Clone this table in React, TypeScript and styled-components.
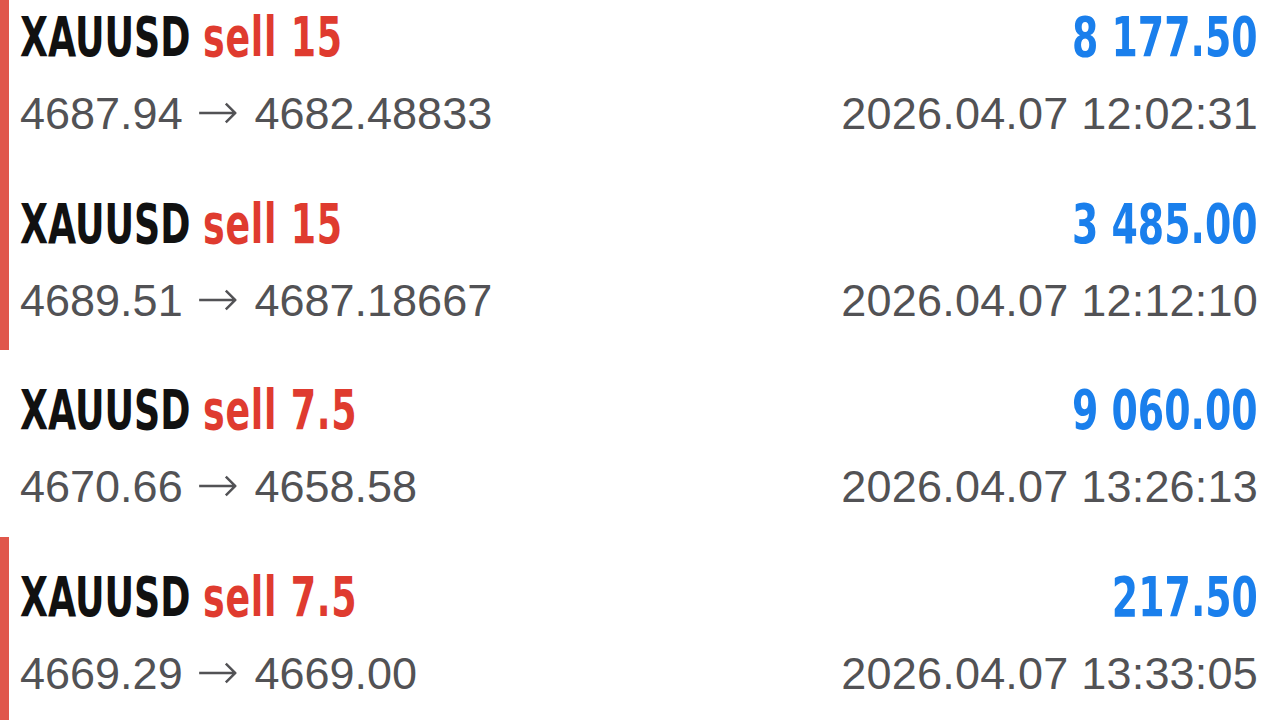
import React from 'react'
import styled, { createGlobalStyle } from 'styled-components'

type Deal = {
  symbol: string
  side: string
  volume: string
  profit: string
  open: string
  close: string
  time: string
  marked: boolean
}

const deals: Deal[] = [
  { symbol: 'XAUUSD', side: 'sell', volume: '15', profit: '8 177.50', open: '4687.94', close: '4682.48833', time: '2026.04.07 12:02:31', marked: true },
  { symbol: 'XAUUSD', side: 'sell', volume: '15', profit: '3 485.00', open: '4689.51', close: '4687.18667', time: '2026.04.07 12:12:10', marked: true },
  { symbol: 'XAUUSD', side: 'sell', volume: '7.5', profit: '9 060.00', open: '4670.66', close: '4658.58', time: '2026.04.07 13:26:13', marked: false },
  { symbol: 'XAUUSD', side: 'sell', volume: '7.5', profit: '217.50', open: '4669.29', close: '4669.00', time: '2026.04.07 13:33:05', marked: true },
]

const GlobalStyle = createGlobalStyle`
  html, body {
    margin: 0;
    padding: 0;
    background: #ffffff;
    overflow: hidden;
  }
  body {
    font-family: "Liberation Sans", Arial, sans-serif;
  }
`

const App: React.FC = () => {
  return (
    <>
      <GlobalStyle />
      <DealList>
        {deals.map((d, i) => (
          <DealRow key={i} marked={d.marked}>
            <TopLine>
              <Title>
                {d.symbol} <Side>{d.side} {d.volume}</Side>
              </Title>
              <Profit>{d.profit}</Profit>
            </TopLine>
            <BottomLine>
              <Prices>
                {d.open} <Arrow>→</Arrow> {d.close}
              </Prices>
              <Time>{d.time}</Time>
            </BottomLine>
          </DealRow>
        ))}
      </DealList>
    </>
  )
}

const DealList = styled.div`
  display: flex;
  flex-direction: column;
  margin-top: -23px;
  width: 1280px;
`

const DealRow = styled.div<{ marked: boolean }>`
  box-sizing: border-box;
  height: 186.5px;
  padding: 32px 22px 0 11px;
  border-left: 9px solid ${(props) => (props.marked ? '#e0574b' : 'transparent')};
  display: flex;
  flex-direction: column;
`

const TopLine = styled.div`
  display: flex;
  justify-content: space-between;
  align-items: baseline;
  height: 56px;
`

const BottomLine = styled.div`
  display: flex;
  justify-content: space-between;
  align-items: baseline;
  margin-top: 24px;
`

// no condensed face installed, so squeeze DejaVu Condensed Bold
const condensed = `
  display: inline-block;
  font-family: "DejaVu Sans Condensed", "DejaVu Sans", sans-serif;
  font-stretch: condensed;
  font-weight: 700;
  font-size: 55px;
  line-height: 56px;
  white-space: nowrap;
`

const Title = styled.div`
  ${condensed}
  transform: scaleX(0.735);
  transform-origin: left center;
  color: #111111;
`

const Side = styled.span`
  color: #df3b2f;
  letter-spacing: 1px;
`

const Profit = styled.div`
  ${condensed}
  transform: scaleX(0.765);
  transform-origin: right center;
  color: #1a7fec;
`

const Prices = styled.div`
  font-family: "Liberation Sans", Arial, sans-serif;
  font-size: 45px;
  line-height: 45px;
  color: #525255;
  white-space: nowrap;
`

const Arrow = styled.span`
  font-family: "DejaVu Sans", sans-serif;
  font-size: 51px;
  font-weight: 200;
  margin: 0 3px 0 1px;
`

const Time = styled.div`
  font-family: "Liberation Sans", Arial, sans-serif;
  font-size: 45px;
  line-height: 45px;
  letter-spacing: 0.2px;
  color: #525255;
  white-space: nowrap;
`

export default App
